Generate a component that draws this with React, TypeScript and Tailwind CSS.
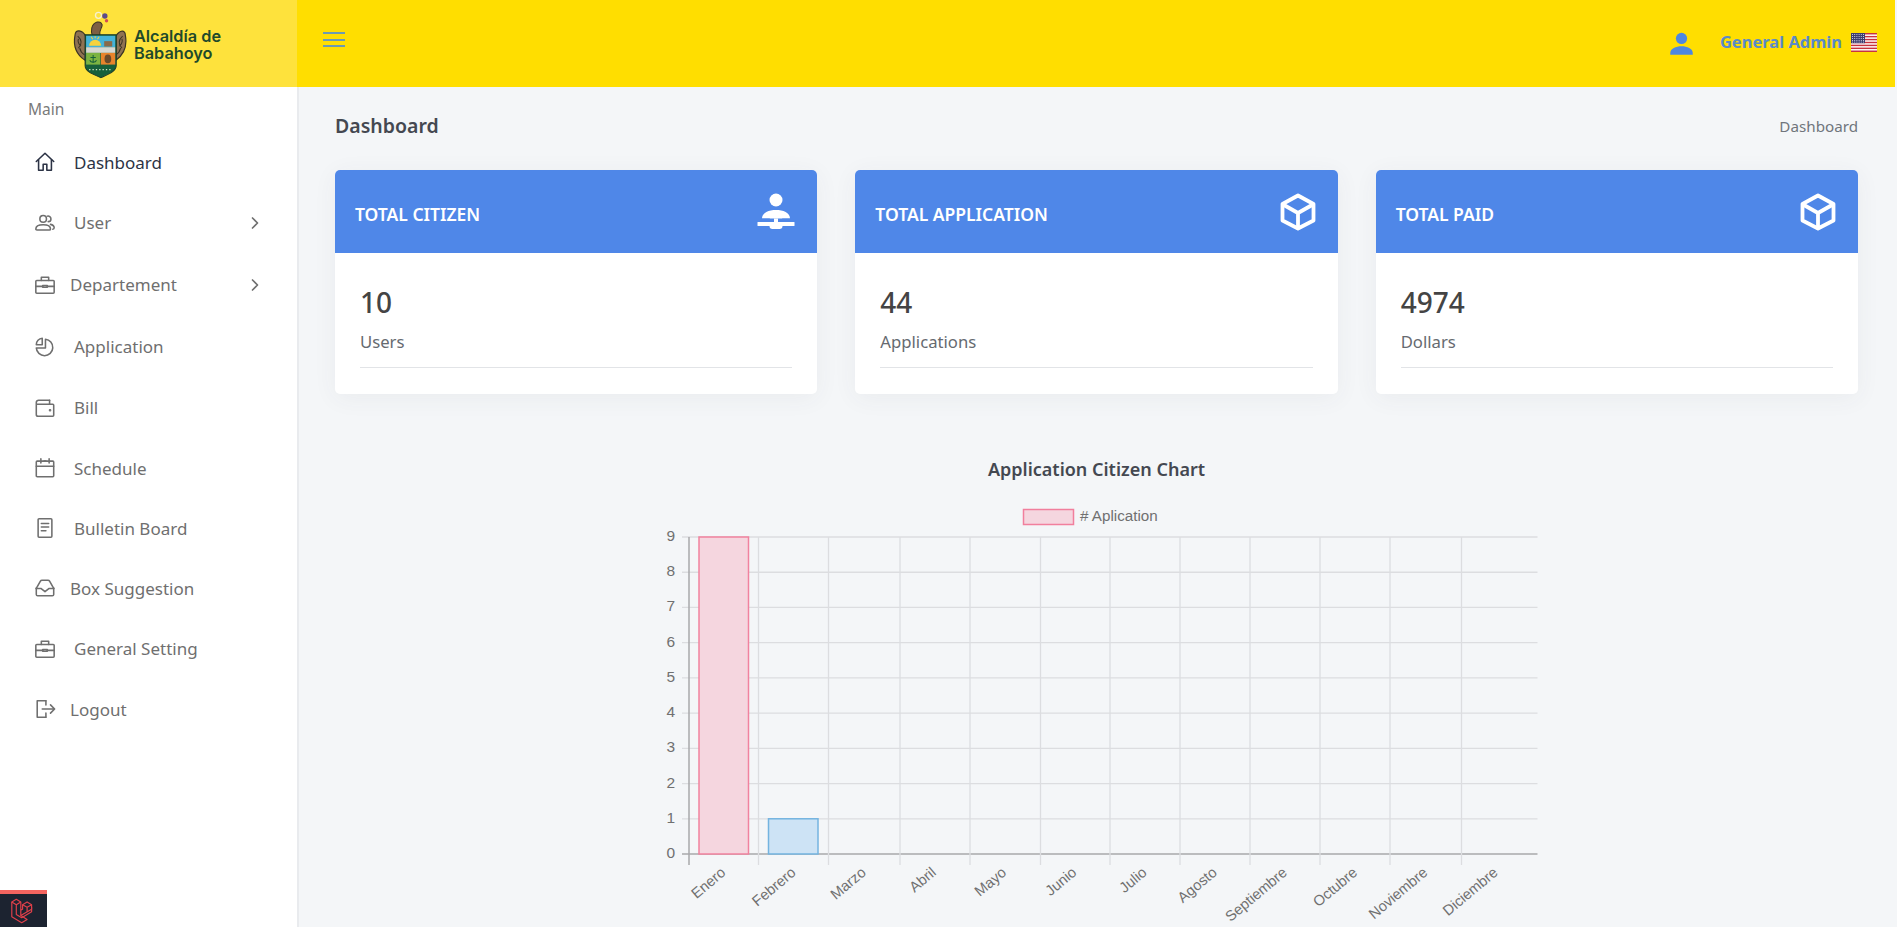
import React from "react";

const sans = "font-['Noto_Sans',sans-serif]";

const S = ({ children, className }: { children: React.ReactNode; className?: string }) => (
  <svg viewBox="0 0 24 24" fill="none" stroke="currentColor" strokeWidth="1.7" strokeLinecap="round" strokeLinejoin="round" className={className ?? "w-[22px] h-[22px]"}>
    {children}
  </svg>
);
const Home = () => (<S><path d="M2.500 11.500 12 2.500l9.500 9" /><path d="M5 9.500V21h5v-6.500h4V21h5V9.500" /></S>);
const Users = () => (<S><circle cx="10" cy="7.500" r="3.600" /><path d="M2 18.500c0-3 3-4.600 8-4.600s8 1.600 8 4.600c0 .8-.5 1.200-1.200 1.200H3.200c-.7 0-1.200-.4-1.200-1.200Z" /><path d="M14.500 4.500c2-.6 4 .9 4 3s-1.400 3-3 3" /><path d="M18 13.500c2.500.5 4 1.900 4 3.800 0 1-.5 1.500-1.500 1.500" /></S>);
const Brief = () => (<S><rect x="2" y="7" width="20" height="14" rx="1" /><path d="M8 7V3.500h8V7" /><path d="M2 13.500h7.500M14.500 13.500H22" /><rect x="9.500" y="12.500" width="5" height="2" /></S>);
const Pie = () => (<S><path d="M12.500 3.500a9 9 0 1 1-10 9.500h10Z" /><path d="M9 2.500v7H2.500A7 7 0 0 1 9 2.500Z" /></S>);
const Wallet = () => (<S><path d="M17 3.500H5A2.500 2.500 0 0 0 2.500 6v13A2 2 0 0 0 4.500 21h16a1 1 0 0 0 1-1V9a1 1 0 0 0-1-1H2.800" /><path d="M17 3.500V8" /><circle cx="17.500" cy="14.500" r=".6" /></S>);
const Cal = () => (<S><rect x="2.500" y="4.500" width="19" height="17" rx="1" /><path d="M2.500 10h19M7.500 2v4.500M16.500 2v4.500M11 4.500h2" /></S>);
const Doc = () => (<S><rect x="4.500" y="2" width="15" height="20" rx="1" /><path d="M8 7h8M8 11h8M8 15h5" /></S>);
const Inbox = () => (<S><path d="M2.500 12.500 7 4.500c.4-.7.9-1 1.700-1h6.600c.8 0 1.300.3 1.700 1l4.500 8" /><path d="M2.500 12v7a1.500 1.500 0 0 0 1.500 1.500h16a1.500 1.500 0 0 0 1.500-1.500v-7" /><path d="M2.500 12.500h5L12 16l4.500-3.500h5" /></S>);
const Logout = () => (<S><path d="M13 3H3.500v18H13" /><path d="M13 3v4.500M13 16.500V21" /><path d="M9 12h13M18 7.500l4.500 4.500-4.500 4.500" /></S>);

const Crest = () => (
  <svg viewBox="30 20 170 215" className="w-[57px] h-[72px] shrink-0">
    <circle cx="112" cy="42" r="9" fill="none" stroke="#f6f0d0" strokeWidth="4" />
    <circle cx="131" cy="44" r="8" fill="#5c4a8c" />
    <circle cx="136" cy="58" r="5" fill="#d24a55" />
    <path d="M94 104c-6-16-4-36 14-42 10-2 18 5 14 14-3 7-8 10-6 28Z" fill="#7e5f44" stroke="#3a3324" strokeWidth="3" />
    <path d="M74 104C62 84 44 84 42 100c-5 26-1 56 30 76Z" fill="#8f7252" stroke="#3a3324" strokeWidth="3.500" />
    <path d="M164 104c12-20 28-18 28-4 5 26 0 56-28 76Z" fill="#8f7252" stroke="#3a3324" strokeWidth="3.500" />
    <path d="M50 104c12 10 14 24 2 36M52 112c-4 12 4 18 8 22M56 140c2 10 8 16 14 20M184 104c-12 10-14 24-2 36M182 112c4 12-4 18-8 22M178 140c-2 10-8 16-14 20" fill="none" stroke="#3a3324" strokeWidth="3" />
    <path d="M72 100h93v92c0 18-24 26-46 36-24-10-47-18-47-36Z" fill="#17603b" stroke="#1c3a2a" strokeWidth="3" />
    <rect x="75" y="103" width="87" height="34" fill="#45b3d8" />
    <path d="M84 133a18 18 0 0 1 36 0Z" fill="#f7d23e" />
    <path d="M102 104v6M90 106l5 7M114 106l-5 7" stroke="#f7d23e" strokeWidth="3" />
    <rect x="129" y="119" width="24" height="16" fill="#8a6a4a" />
    <rect x="75" y="137" width="87" height="17" fill="#d8d8d2" />
    <rect x="75" y="154" width="42" height="35" fill="#7cb342" />
    <path d="M96 160v24M88 168h16M86 176c3 8 17 8 20 0" fill="none" stroke="#17603b" strokeWidth="3" />
    <rect x="119" y="154" width="43" height="35" fill="#e8842c" />
    <ellipse cx="140" cy="172" rx="10" ry="13" fill="#6b4a2a" />
    <path d="M84 204h70" stroke="#cfe6c2" strokeWidth="4" strokeDasharray="4 6" />
  </svg>
);

const Flag = () => (
  <svg viewBox="0 0 26 19" className="w-[26px] h-[19px]">
    <rect width="26" height="19" fill="#fff" />
    {[0, 1, 2, 3, 4, 5, 6].map((i) => (
      <rect key={i} y={i * 2.92} width="26" height="1.46" fill="#c8313e" />
    ))}
    <rect width="14" height="10.2" fill="#3c3b6e" />
    {[1.5, 3.5, 5.5, 7.5, 9].map((y) => [1.5, 3.7, 5.9, 8.1, 10.3, 12.5].map((x) => (
      <circle key={x + "-" + y} cx={x} cy={y} r=".55" fill="#dfe3f0" />
    )))}
  </svg>
);

const Cube = () => (
  <svg viewBox="0 0 36 38" fill="none" stroke="#fff" strokeWidth="3.8" strokeLinejoin="round" strokeLinecap="round" className="w-[36px] h-[38px]">
    <path d="M18 2.500 33.500 11v16.500L18 35.500 2.500 27.500V11Z" />
    <path d="M3 11.500 18 20l15-8.500M18 20v15" />
  </svg>
);
const Citizen = () => (
  <svg viewBox="0 0 38 38" fill="#fff" className="w-[38px] h-[38px]">
    <circle cx="19" cy="7" r="6.500" />
    <path d="M5 25.500c0-6 7-8.500 14-8.500s14 2.500 14 8.500Z" />
    <rect x="0.500" y="29" width="37" height="4" rx=".5" />
    <rect x="12.500" y="24" width="13" height="12" rx="3" />
    <rect x="5" y="25.500" width="28" height="3.500" fill="#4f87e8" />
    <rect x="17" y="25.500" width="4" height="4" />
  </svg>
);

const nav: { label: string; icon: React.ReactNode; h: string; ml: string; arrow?: boolean; active?: boolean }[] = [
  { label: "Dashboard", icon: <Home />, h: "h-[60px]", ml: "ml-[18px]", active: true },
  { label: "User", icon: <Users />, h: "h-[61px]", ml: "ml-[18px]", arrow: true },
  { label: "Departement", icon: <Brief />, h: "h-[63px]", ml: "ml-[14px]", arrow: true },
  { label: "Application", icon: <Pie />, h: "h-[61px]", ml: "ml-[18px]" },
  { label: "Bill", icon: <Wallet />, h: "h-[61px]", ml: "ml-[18px]" },
  { label: "Schedule", icon: <Cal />, h: "h-[60px]", ml: "ml-[18px]" },
  { label: "Bulletin Board", icon: <Doc />, h: "h-[60px]", ml: "ml-[18px]" },
  { label: "Box Suggestion", icon: <Inbox />, h: "h-[60px]", ml: "ml-[14px]" },
  { label: "General Setting", icon: <Brief />, h: "h-[61px]", ml: "ml-[18px]" },
  { label: "Logout", icon: <Logout />, h: "h-[60px]", ml: "ml-[14px]" },
];

const cards = [
  { title: "TOTAL CITIZEN", icon: <Citizen />, value: "10", unit: "Users" },
  { title: "TOTAL APPLICATION", icon: <Cube />, value: "44", unit: "Applications" },
  { title: "TOTAL PAID", icon: <Cube />, value: "4974", unit: "Dollars" },
];

const months = ["Enero", "Febrero", "Marzo", "Abril", "Mayo", "Junio", "Julio", "Agosto", "Septiembre", "Octubre", "Noviembre", "Diciembre"];
const vx = [689, 758.5, 828.5, 900, 970, 1040.5, 1110, 1180, 1250, 1320, 1390, 1461.5];

const Chart = () => {
  const y = (v: number) => 854 - v * 35.22;
  const font = "'Liberation Sans', Arial, sans-serif";
  return (
    <svg viewBox="639 495 915 432" className="w-[915px] h-[432px]" style={{ fontFamily: font }}>
      <rect x="1023.5" y="509.5" width="50" height="15" fill="#f5d6df" stroke="#f17f9d" strokeWidth="1.5" />
      <text x="1080" y="521" fontSize="15.2" fill="#707070">
        # Aplication
      </text>
      {Array.from({ length: 10 }, (_, v) => (
        <g key={v}>
          <line x1="682" x2="1537.5" y1={y(v)} y2={y(v)} stroke={v === 0 ? "#a9a9ab" : "#dcdde0"} strokeWidth={v === 0 ? 1.6 : 1.3} />
          <text x="675" y={y(v) + 4} fontSize="15.5" fill="#707070" textAnchor="end">
            {v}
          </text>
        </g>
      ))}
      {vx.map((x, i) => (
        <line key={x} x1={x} x2={x} y1="537" y2="865" stroke={i === 0 ? "#a9a9ab" : "#dcdde0"} strokeWidth={i === 0 ? 1.5 : 1.3} />
      ))}
      <rect x="699" y="537" width="49.5" height="317" fill="#f5d6df" stroke="#f1829f" strokeWidth="1.5" />
      <rect x="768.5" y={y(1)} width="49.5" height="35.2" fill="#cde3f5" stroke="#74b4e0" strokeWidth="1.5" />
      {months.map((m, i) => {
        const cx = 726.5 + i * 70.2;
        return (
          <text key={m} fontSize="14.7" fill="#707070" textAnchor="end" transform={`translate(${cx} 874) rotate(-40)`}>
            {m}
          </text>
        );
      })}
    </svg>
  );
};

export default function App() {
  return (
    <div className={`w-[1897px] h-[927px] overflow-hidden bg-[#f4f6f8] flex flex-col ${sans}`}>
      <header className="h-[87px] w-[1895px] shrink-0 flex bg-[#ffde00] relative z-10">
        <div className="w-[297px] h-full bg-[#fee23c] flex items-center pl-[71px] gap-[6px]">
          <Crest />
          <div className="font-['Inter',sans-serif] font-semibold text-[#1f4a2b] text-[16.3px] leading-[17px] mt-[2px]">
            Alcaldía de
            <br />
            Babahoyo
          </div>
        </div>
        <div className="flex-1 flex items-center pl-[26px] pr-[18px] pb-[2px]">
          <div className="w-[22px] flex flex-col gap-[4.5px] -mt-[6px]">
            <span className="h-[2px] bg-[#6c9bb0] block" />
            <span className="h-[2px] bg-[#6c9bb0] block" />
            <span className="h-[2px] bg-[#6c9bb0] block" />
          </div>
          <div className="flex-1" />
          <svg viewBox="0 0 24 24" fill="#4e87e0" className="w-[27px] h-[27px] mr-[25px] mt-[2px]">
            <circle cx="12" cy="7.500" r="5" />
            <path d="M2 22v-1.500C2 16.500 7 14.500 12 14.500s10 2 10 6V22Z" />
          </svg>
          <span className="text-[16.5px] font-bold text-[#5a8ac8] leading-none mr-[9px]">General Admin</span>
          <Flag />
        </div>
      </header>
      <div className="flex flex-1 min-h-0">
        <aside className="w-[297px] shrink-0 bg-white relative border-r-2 border-[#e9ebee] box-content -mr-[2px]">
          <div className="h-[45px] pl-[28px] pt-[12px] text-[15.5px] leading-[20px] text-[#7a7a7a]">Main</div>
          <nav className="pl-[34px] pr-[36px]">
            {nav.map((n) => (
              <div key={n.label} className={`${n.h} flex items-center ${n.active ? "text-[#2c3345]" : "text-[#6f6f6f]"}`}>
                <span className="w-[22px] flex justify-center">{n.icon}</span>
                <span className={`${n.ml} text-[17px] leading-none`}>{n.label}</span>
                {n.arrow && (
                  <svg viewBox="0 0 12 16" className="w-[10px] h-[14px] ml-auto mr-[1px]" fill="none" stroke="#6f6f6f" strokeWidth="2" strokeLinecap="round" strokeLinejoin="round">
                    <path d="m3 2 6 6-6 6" />
                  </svg>
                )}
              </div>
            ))}
          </nav>
          <div className="absolute left-0 bottom-0 w-[47px] h-[37px] bg-[#1c2330] border-t-[4px] border-[#f4645f] flex items-center justify-center">
            <svg viewBox="0 0 30 30" fill="none" stroke="#e0404a" strokeWidth="1.3" strokeLinejoin="round" className="w-[27px] h-[27px]">
              <path d="M2 5.500 7 2.500l5 3v15L19 25l-6 3.500-11-6.500Z" />
              <path d="M7 8.500 2 5.500M7 8.500l5-3M7 8.500v11l6 3.500 11-6.500v-5" />
              <path d="m12 20.500 12-7v-5l-5-3-5 3v5l-2 1" />
              <path d="m14 8.500 5 3 5-3M19 11.500v5" />
            </svg>
          </div>
        </aside>
        <main className="flex-1 min-w-0 pl-[38px] pr-[39px]">
          <div className="h-[83px] flex items-start justify-between pt-[26px]">
            <h1 className="text-[19.5px] font-semibold leading-[26px] text-[#444851]">Dashboard</h1>
            <span className="text-[15.2px] leading-[26px] text-[#70757c]">Dashboard</span>
          </div>
          <div className="grid grid-cols-3 gap-[38px]">
            {cards.map((c) => (
              <div key={c.title} className="h-[224px] rounded-[5px] bg-white shadow-[0_4px_24px_rgba(60,70,90,0.06)] overflow-hidden">
                <div className="h-[83px] bg-[#4f87e8] flex items-center justify-between pl-[20px] pr-[22px]">
                  <span className="text-[17.5px] font-semibold text-white leading-none mt-[6px]">{c.title}</span>
                  {c.icon}
                </div>
                <div className="px-[25px]">
                  <div className="pt-[31px] text-[28px] leading-[36px] font-medium text-[#444444]">{c.value}</div>
                  <div className="mt-[10px] text-[16.7px] leading-[24px] text-[#666a70]">{c.unit}</div>
                  <div className="mt-[13px] border-t border-[#e2e4e7]" />
                </div>
              </div>
            ))}
          </div>
          <h2 className="mt-[61px] mb-[12px] h-[28px] leading-[28px] text-center text-[18px] font-semibold text-[#444851]">Application Citizen Chart</h2>
          <div className="flex justify-center">
            <Chart />
          </div>
        </main>
      </div>
    </div>
  );
}
